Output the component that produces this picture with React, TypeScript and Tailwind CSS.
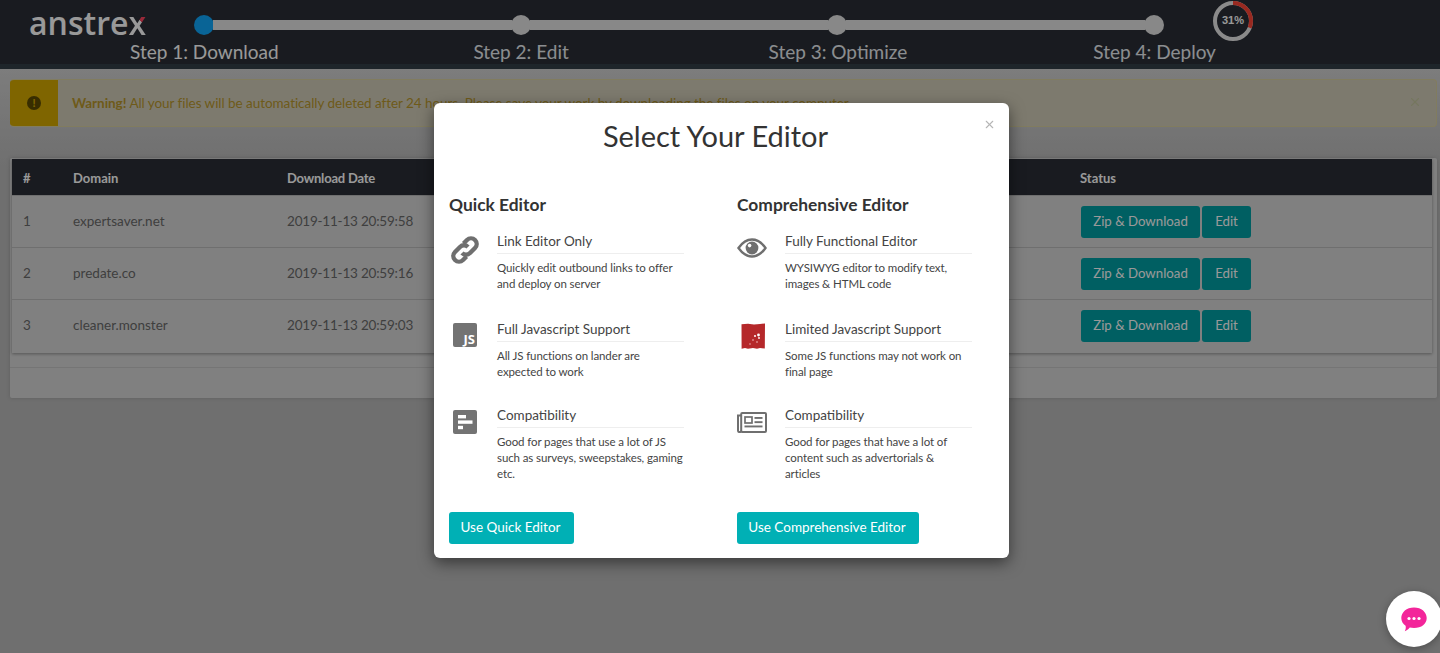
import React from 'react';
import { X } from 'lucide-react';

const rows = [
  { id: 1, domain: 'expertsaver.net', date: '2019-11-13 20:59:58' },
  { id: 2, domain: 'predate.co', date: '2019-11-13 20:59:16' },
  { id: 3, domain: 'cleaner.monster', date: '2019-11-13 20:59:03' },
];

const steps = ['Step 1: Download', 'Step 2: Edit', 'Step 3: Optimize', 'Step 4: Deploy'];

const LinkIcon = () => (
  <svg viewBox="0 0 30 30" className="w-[30px] h-[30px] mt-[2px] ml-px" fill="none" stroke="#6f6f6f" strokeWidth="4.4">
    <path d="M13.5 8.5 L17 5 a5.6 5.6 0 0 1 8 8 l-5 5 a5.6 5.6 0 0 1 -8 0" />
    <path d="M16.5 21.5 L13 25 a5.6 5.6 0 0 1 -8 -8 l5 -5 a5.6 5.6 0 0 1 8 0" />
  </svg>
);

const EyeIcon = () => (
  <svg viewBox="0 0 30 20" className="w-[30px] h-[20px] mt-[5px]">
    <path d="M1.5 10 C6 3.5 10 1.5 15 1.5 S24 3.5 28.5 10 C24 16.5 20 18.5 15 18.5 S6 16.5 1.5 10 Z" fill="none" stroke="#6f6f6f" strokeWidth="2.4" />
    <circle cx="15" cy="10" r="6.4" fill="#6f6f6f" />
    <circle cx="12.6" cy="7.6" r="1.8" fill="#fff" />
  </svg>
);

const JsIcon = () => (
  <div className="w-6 h-6 mt-[2px] ml-[4px] rounded-[2px] bg-[#737373] flex items-end justify-end pr-[2px] text-[13px] leading-[16px] font-bold text-white font-['Open_Sans',sans-serif]">
    JS
  </div>
);

const BrokenJsIcon = () => (
  <svg viewBox="0 0 24 26" className="w-6 h-[26px] mt-[2px] ml-[4px]">
    <path d="M0.5 1.2 L7 0.8 L13 1.4 L19 1 L24 0.5 L23.8 25.6 L19 25 L16 25.8 L12 25 L7 25.8 L4 25 L0.6 25.8 Z" fill="#b5282a" />
    <circle cx="17.5" cy="12" r="1.4" fill="#fff" />
    <circle cx="14" cy="13" r="1" fill="#fff" />
    <circle cx="18" cy="15" r="0.9" fill="#fff" />
    <circle cx="12" cy="17" r="0.8" fill="#f3c5c5" />
    <circle cx="16" cy="19" r="0.8" fill="#f3c5c5" />
    <circle cx="9" cy="21" r="0.7" fill="#f3c5c5" />
  </svg>
);

const AlignIcon = () => (
  <svg viewBox="0 0 24 24" className="w-6 h-6 mt-[3px] ml-[4px]">
    <rect width="24" height="24" rx="2" fill="#737373" />
    <rect x="5" y="5" width="8" height="3.4" fill="#fff" />
    <rect x="5" y="10.4" width="14.5" height="3.4" fill="#fff" />
    <rect x="5" y="15.8" width="5" height="3.4" fill="#fff" />
  </svg>
);

const NewsIcon = () => (
  <svg viewBox="0 0 30 21" className="w-[30px] h-[21px] mt-[5px]">
    <rect x="4.2" y="1" width="24.8" height="19" rx="1" fill="none" stroke="#6f6f6f" strokeWidth="2" />
    <path d="M4.2 3.5 H1 V18.5 a1.5 1.5 0 0 0 3.2 0" fill="none" stroke="#6f6f6f" strokeWidth="2" />
    <rect x="8" y="5" width="7" height="6" fill="none" stroke="#6f6f6f" strokeWidth="1.7" />
    <rect x="17.5" y="5" width="8" height="1.9" fill="#6f6f6f" />
    <rect x="17.5" y="9.2" width="8" height="1.9" fill="#6f6f6f" />
    <rect x="7.5" y="13.5" width="18" height="1.9" fill="#6f6f6f" />
  </svg>
);

const Feature = ({ icon, title, text, className = '' }: { icon: React.ReactNode; title: string; text: React.ReactNode; className?: string }) => (
  <div className={`flex ${className}`}>
    <div className="w-12 shrink-0">{icon}</div>
    <div className="w-[187px]">
      <h4 className="text-[13.5px] leading-[20px] text-[#444] pb-[2px] border-b border-[#eeeeee] mt-[-2px]">{title}</h4>
      <p className="text-[11.5px] tracking-[-0.1px] leading-[16px] text-[#444] mt-[6px]">{text}</p>
    </div>
  </div>
);

const ProgressRing = () => (
  <svg viewBox="0 0 42 42" className="w-[42px] h-[42px] shrink-0">
    <circle cx="21" cy="21" r="18" fill="none" stroke="#e6e6e6" strokeWidth="4" />
    <circle cx="21" cy="21" r="18" fill="none" stroke="#ff4536" strokeWidth="4" strokeDasharray="35 113" transform="rotate(-90 21 21)" />
    <text x="21" y="24" textAnchor="middle" fontSize="11" fontWeight="700" fill="#ffffff" fontFamily="Liberation Sans, sans-serif">31%</text>
  </svg>
);

export default function App() {
  return (
    <div className="relative h-[653px] w-full overflow-hidden bg-[linear-gradient(#d0d0d0_69px,#b9b9b9_170px)] font-['Lato',sans-serif] text-[14px] text-[#333]">
      {/* top bar with the steps */}
      <header className="h-[69px] bg-[#2a2e36] border-b-[5px] border-[#323f47] overflow-hidden">
        <div className="flex h-[41px] pl-[29px]">
          <div className="w-[117px] h-[34px] mt-[6px] text-[32px] leading-[34px] font-semibold font-['Open_Sans',sans-serif] text-white">
            anstre
            <span className="bg-[linear-gradient(45deg,#ffffff_58%,#ff4560_58%)] bg-clip-text text-transparent">x</span>
          </div>
          <div className="flex items-center w-[970px] ml-[48px] mt-[8px] h-[33px]">
            <span className="w-5 h-5 rounded-full bg-[#10a7fa] shrink-0" />
            <span className="flex-1 h-[10px] bg-[#e3e3e3] -mx-px" />
            <span className="w-5 h-5 rounded-full bg-[#e3e3e3] shrink-0" />
            <span className="flex-1 h-[10px] bg-[#e3e3e3] -mx-px" />
            <span className="w-5 h-5 rounded-full bg-[#e3e3e3] shrink-0" />
            <span className="flex-1 h-[10px] bg-[#e3e3e3] -mx-px" />
            <span className="w-5 h-5 rounded-full bg-[#e3e3e3] shrink-0" />
          </div>
          <div className="ml-[48px]"><ProgressRing /></div>
        </div>
        <div className="grid grid-cols-4 w-[1267px] ml-[46px]">
          {steps.map((s, i) => (
            <div key={s} className={`text-center text-[19px] leading-[22px] ${i === 0 ? 'text-white' : 'text-[#e8ecf0]'}`}>
              {s}
            </div>
          ))}
        </div>
      </header>

      {/* warning */}
      <div className="ml-[10px] mr-[3px] mt-[10px] h-[48px] flex items-center rounded-[4px] bg-[#d1ccb8] border border-l-0 border-[#d8cf9f] overflow-hidden">
        <div className="w-[48px] h-full bg-[#d4a800] flex items-center justify-center">
          <span className="w-[14px] h-[14px] rounded-full bg-[#5e4c00] text-[#d4a800] text-[11px] leading-[14px] font-black text-center">!</span>
        </div>
        <p className="ml-[14px] flex-1 text-[13.5px] tracking-[-0.05px] text-[#b8962c]">
          <strong>Warning!</strong> All your files will be automatically deleted after 24 hours. Please save your work by downloading the files on your computer
        </p>
        <X className="w-[14px] h-[14px] mr-[14px] mb-[2px] text-[#c3c69e]" />
      </div>

      {/* downloads table */}
      <div className="ml-[10px] mr-[3px] mt-[31px] h-[240px] bg-[#d6d6d6] rounded-[2px] shadow-[0_0_4px_rgba(0,0,0,0.15)] pt-[1px]">
        <div className="mx-[2px] mr-[5px] pb-[2px] shadow-[0_1px_3px_rgba(0,0,0,0.35)]">
          <div className="flex items-center h-[36px] pt-[4px] bg-[#2a2e36] text-[13px] font-bold text-white">
            <div className="w-[61px] pl-[11px]">#</div>
            <div className="w-[214px]">Domain</div>
            <div className="w-[793px] tracking-[-0.2px]">Download Date</div>
            <div>Status</div>
          </div>
          {rows.map((r) => (
            <div key={r.id} className="flex items-center h-[52px] first:h-[53px] border-t border-[#b9b9b9] first:border-t-0 text-[13.5px] text-[#696969]">
              <div className="w-[61px] pl-[11px]">{r.id}</div>
              <div className="w-[214px]">{r.domain}</div>
              <div className="w-[794px] tracking-[-0.2px]">{r.date}</div>
              <div className="flex gap-[2px]">
                <button className="h-[32px] w-[119px] rounded-[3px] bg-[#009ea3] text-white text-[13.25px]">Zip &amp; Download</button>
                <button className="h-[32px] w-[49px] rounded-[3px] bg-[#009ea3] text-white text-[13.25px]">Edit</button>
              </div>
            </div>
          ))}
        </div>
        <div className="mt-[14px] border-t border-[#c4c4c4]" />
      </div>

      {/* dimmed backdrop + modal */}
      <div className="absolute inset-0 z-10 bg-black/40 pt-[103px] pl-[434px]">
        <div className="w-[575px] h-[455px] rounded-[6px] bg-white shadow-[0_5px_15px_rgba(0,0,0,0.5)] relative">
          <X className="absolute top-[15px] right-[13px] w-[13px] h-[13px] text-[#b5b5b5]" />
          <h2 className="pt-[15px] pr-[12px] text-center text-[29px] leading-[36px] text-[#333]">Select Your Editor</h2>
          <div className="mt-[40px] pl-[15px] flex">
            <div className="w-[288px] h-[350px] flex flex-col">
              <h3 className="text-[17.4px] leading-[22px] font-bold text-[#333] mb-[17px]">Quick Editor</h3>
              <Feature className="mb-[29px]" icon={<LinkIcon />} title="Link Editor Only" text={<>Quickly edit outbound links to offer<br />and deploy on server</>} />
              <Feature className="mb-[27px]" icon={<JsIcon />} title="Full Javascript Support" text={<>All JS functions on lander are<br />expected to work</>} />
              <Feature icon={<AlignIcon />} title="Compatibility" text={<>Good for pages that use a lot of JS<br />such as surveys, sweepstakes, gaming<br />etc.</>} />
              <button className="mt-auto w-[125px] h-[32px] pb-[2px] pr-[2px] rounded-[3px] bg-[#00b0b5] text-white text-[13.5px]">Use Quick Editor</button>
            </div>
            <div className="w-[240px] h-[350px] flex flex-col">
              <h3 className="text-[17.4px] leading-[22px] font-bold text-[#333] mb-[17px]">Comprehensive Editor</h3>
              <Feature className="mb-[29px]" icon={<EyeIcon />} title="Fully Functional Editor" text={<>WYSIWYG editor to modify text,<br />images &amp; HTML code</>} />
              <Feature className="mb-[27px]" icon={<BrokenJsIcon />} title="Limited Javascript Support" text={<>Some JS functions may not work on<br />final page</>} />
              <Feature icon={<NewsIcon />} title="Compatibility" text={<>Good for pages that have a lot of<br />content such as advertorials &amp;<br />articles</>} />
              <button className="mt-auto w-[182px] h-[32px] pb-[2px] pr-[2px] rounded-[3px] bg-[#00b0b5] text-white text-[13.5px]">Use Comprehensive Editor</button>
            </div>
          </div>
        </div>
      </div>

      {/* chat bubble */}
      <div className="absolute z-20 left-[1386px] top-[591px] w-[56px] h-[56px] rounded-full bg-white shadow-[0_2px_8px_rgba(0,0,0,0.3)] flex items-center justify-center">
        <svg viewBox="0 0 26 25" className="w-[26px] h-[25px]">
          <path d="M13 0.5 C20.5 0.5 25.7 5.2 25.7 11 C25.7 17 20.5 21 13 21 C11.5 21 10 20.8 8.8 20.5 C7 22.5 5 24 3.8 24.3 C4.8 22.5 5 20.5 4.6 18.8 C2 17 0.3 14.3 0.3 11 C0.3 5.2 5.5 0.5 13 0.5 Z" fill="#f3259a" />
          <circle cx="8" cy="11.5" r="1.6" fill="#fff" />
          <circle cx="13" cy="11.5" r="1.6" fill="#fff" />
          <circle cx="18" cy="11.5" r="1.6" fill="#fff" />
        </svg>
      </div>
    </div>
  );
}
